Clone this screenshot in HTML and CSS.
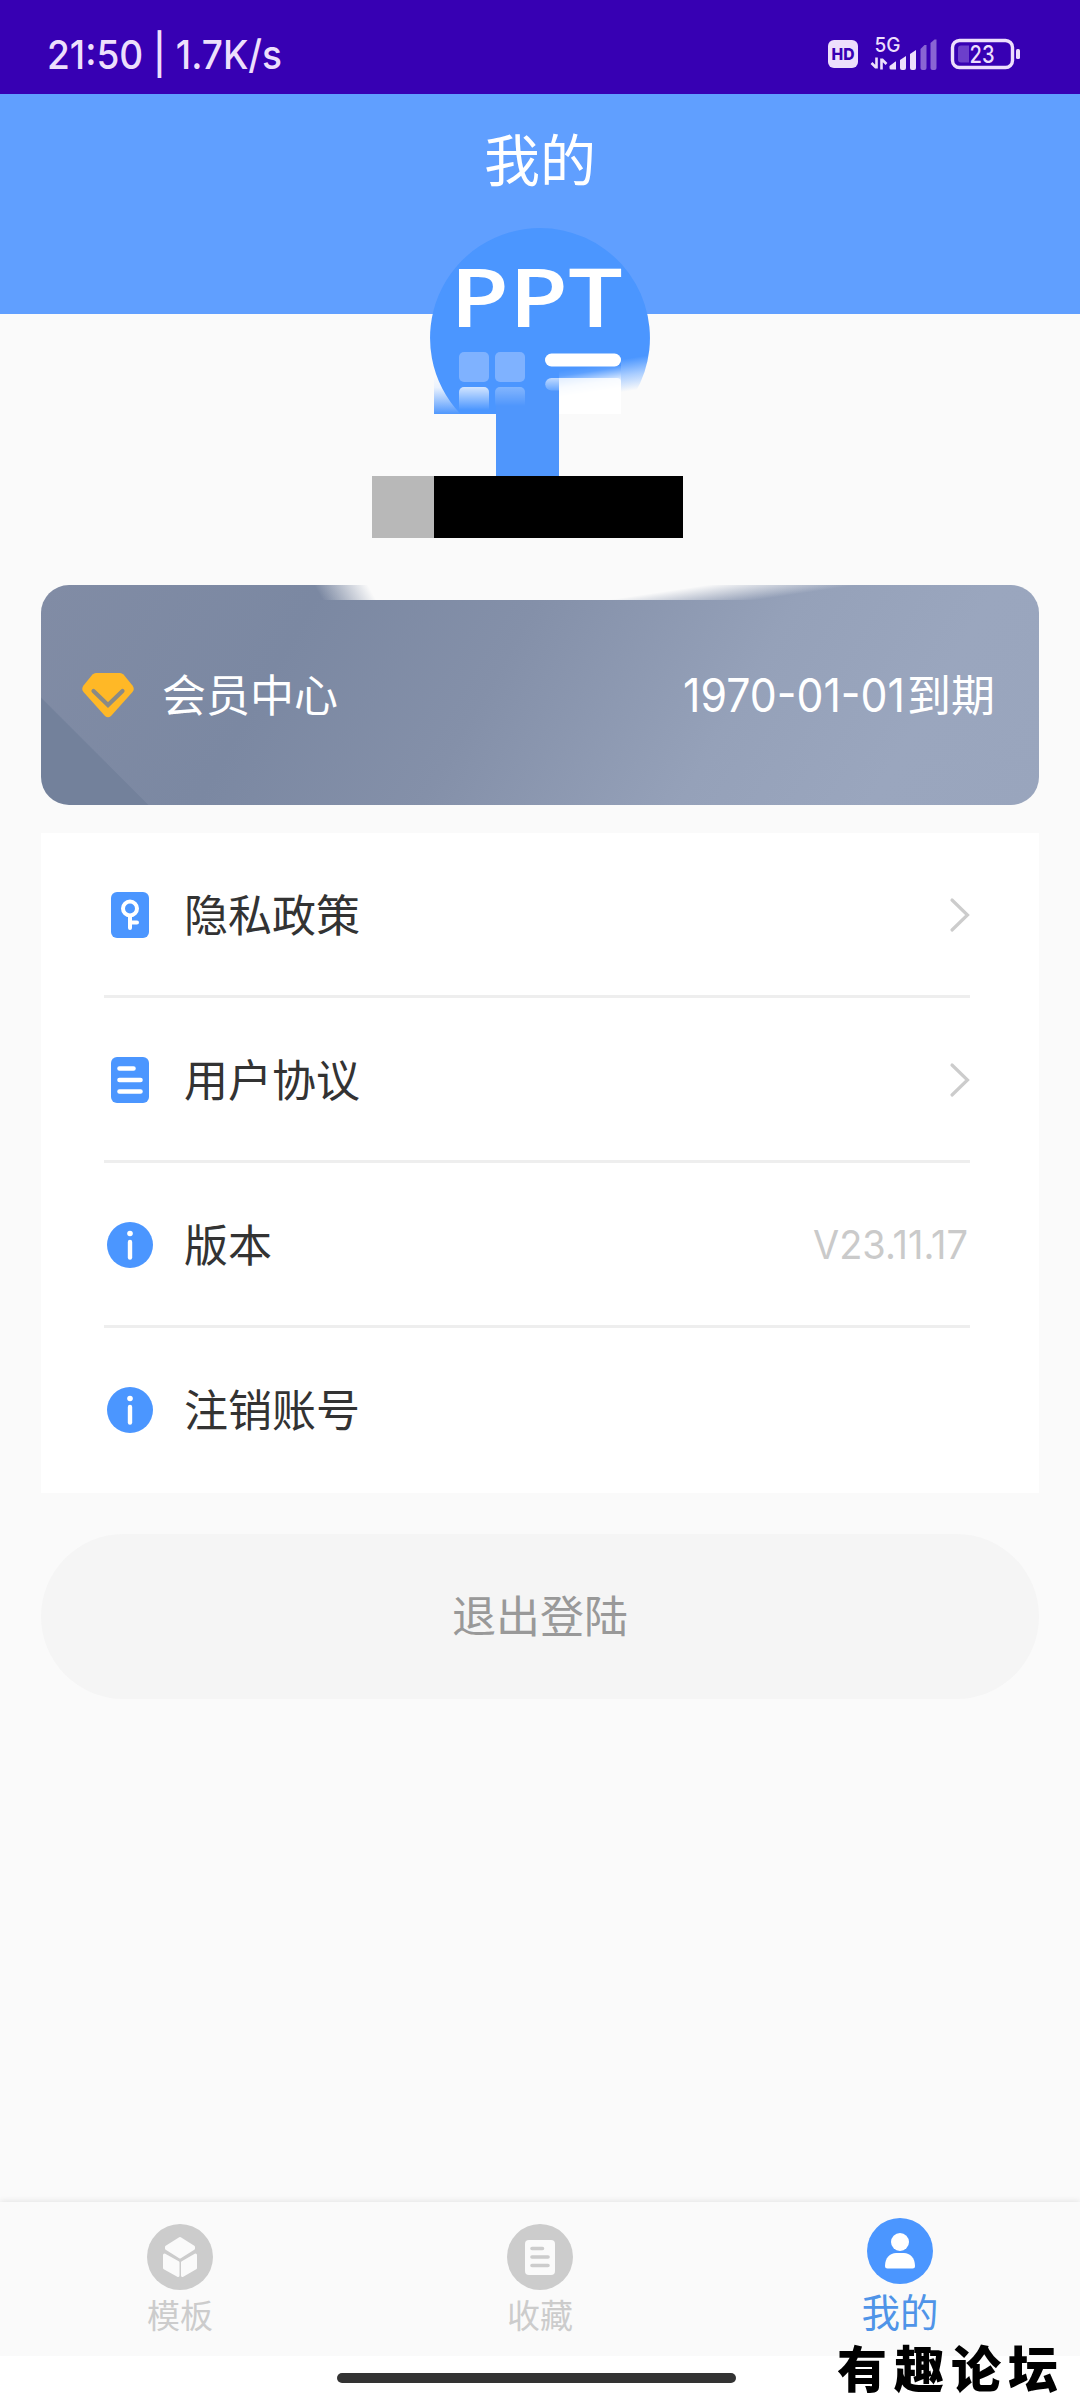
FILE: index.html
```html
<!DOCTYPE html>
<html lang="zh-CN">
<head>
<meta charset="utf-8">
<title>我的</title>
<link rel="stylesheet" href="styles.css">
</head>
<body>
<div class="screen">
  <div class="status">
    <svg class="status-time" width="240" height="50" viewBox="0 0 240 50"><text x="1" y="39" textLength="235" lengthAdjust="spacingAndGlyphs">21:50 | 1.7K/s</text></svg>
    <svg class="status-icons" width="196" height="36" viewBox="826 36 196 36">
      <rect x="828" y="40" width="30" height="28" rx="6" fill="#eddffc"/>
      <text class="hd" x="831.5" y="60" textLength="23" lengthAdjust="spacingAndGlyphs">HD</text>
      <text class="net" x="874.500" y="52" textLength="26" lengthAdjust="spacingAndGlyphs">5G</text>
      <path d="M876.500 57.500v11M876 67.500l-4.500-4.500M881.500 69.500v-11M882 59.500l4.500 4.500" fill="none" stroke="#eddffc" stroke-width="2.600"/>
      <g fill="#eddffc">
        <path d="M889.500 66l6-4.500h.5v8h-5a1.500 1.500 0 0 1-1.500-1.500z"/>
        <path d="M900 60l6-4v12a2 2 0 0 1-2 2h-2a2 2 0 0 1-2-2z"/>
        <path d="M910 54l6-4v18a2 2 0 0 1-2 2h-2a2 2 0 0 1-2-2z"/>
        <path opacity=".45" d="M920.500 49l4-4h2v23a2 2 0 0 1-2 2h-2a2 2 0 0 1-2-2z"/>
        <path opacity=".45" d="M930.500 43l4-3.500h2v28.500a2 2 0 0 1-2 2h-2a2 2 0 0 1-2-2z"/>
      </g>
      <rect x="952.500" y="40.500" width="60" height="27" rx="7" fill="none" stroke="#eddffc" stroke-width="3.400"/>
      <path d="M969 45.500h-8a3 3 0 0 0-3 3v11a3 3 0 0 0 3 3h8z" fill="#6c3fcb"/>
      <text class="level" x="969.500" y="63" textLength="25" lengthAdjust="spacingAndGlyphs">23</text>
      <rect x="1016" y="49" width="4" height="10" rx="1.500" fill="#eddffc"/>
    </svg>
  </div>

  <header class="header"><h1>我的</h1></header>

  <div class="profile">
    <svg class="avatar" width="312" height="312" viewBox="372 228 312 312">
      <defs>
        <clipPath id="disc"><path d="M430 228h220v165H621v21H430z"/></clipPath>
        <linearGradient id="leftFade" x1="0" y1="0" x2="0" y2="1"><stop offset="0" stop-color="#fafafa"/><stop offset=".3" stop-color="#eaf2fe"/><stop offset="1" stop-color="#4f97fd"/></linearGradient>
        <linearGradient id="whiteOut" gradientUnits="userSpaceOnUse" x1="585" y1="367" x2="589" y2="393"><stop offset="0" stop-color="#fff" stop-opacity="0"/><stop offset=".2" stop-color="#fff" stop-opacity=".1"/><stop offset=".65" stop-color="#fff" stop-opacity=".8"/><stop offset="1" stop-color="#fff"/></linearGradient>
        <linearGradient id="edgeOut" gradientUnits="userSpaceOnUse" x1="637" y1="357" x2="642" y2="389"><stop offset="0" stop-color="#4b96ff"/><stop offset=".5" stop-color="#a9cdff"/><stop offset="1" stop-color="#fafafa"/></linearGradient>
        <linearGradient id="tileA" x1="0" y1="0" x2="0" y2="1"><stop offset="0" stop-color="#fff" stop-opacity=".75"/><stop offset="1" stop-color="#fff" stop-opacity="0"/></linearGradient>
        <linearGradient id="tileB" x1="0" y1="0" x2="0" y2="1"><stop offset="0" stop-color="#fff" stop-opacity=".3"/><stop offset="1" stop-color="#fff" stop-opacity="0"/></linearGradient>
        <linearGradient id="stroke2" x1="0" y1="0" x2="0" y2="1"><stop offset="0" stop-color="#fff" stop-opacity=".65"/><stop offset="1" stop-color="#fff" stop-opacity=".15"/></linearGradient>
      </defs>
      <rect x="434" y="376" width="62" height="38" fill="url(#leftFade)"/>
      <path d="M540 228A110 110 0 0 0 461 414.500L540 414H621V350H649.300A110 110 0 0 0 540 228z" fill="#4b96ff" clip-path="url(#disc)"/>
      <path d="M621 350h28.300A110 110 0 0 1 635 393H621z" fill="url(#edgeOut)"/>
      <rect x="496" y="390" width="63" height="86" fill="#4f96fc"/>
      <path d="M559 366h62v48h-62z" fill="url(#whiteOut)"/>
      <rect x="459" y="352" width="30" height="30" rx="5" fill="#7fb2ff"/>
      <rect x="495" y="352" width="30" height="30" rx="5" fill="#7fb2ff"/>
      <path d="M459 410v-18a5 5 0 0 1 5-5h20a5 5 0 0 1 5 5v18z" fill="url(#tileA)"/>
      <path d="M495 406v-14a5 5 0 0 1 5-5h20a5 5 0 0 1 5 5v14z" fill="url(#tileB)"/>
      <rect x="545" y="353.500" width="76" height="13" rx="6.500" fill="#fff"/>
      <path d="M559 378h-7.500a6 6 0 0 0 0 12.500h7.500z" fill="url(#stroke2)"/>
      <path d="M559 378h58a4 4 0 0 1 4 4v32h-62z" fill="#fff" opacity=".8"/>
      <text class="ppt" x="450" y="327" textLength="172.500" lengthAdjust="spacingAndGlyphs">PPT</text>
      <rect x="372" y="476" width="62" height="62" fill="#b8b8b8"/>
      <rect x="434" y="476" width="249" height="62" fill="#000"/>
    </svg>
  </div>

  <section class="member">
    <svg class="gem" width="52" height="46" viewBox="0 0 52 46"><path d="M14 1h24q2 0 3.500 1.500l9 11q2.500 3.500 0 6.500L29 44q-3 2.500-6 0L1.500 20q-2.500-3 0-6.500l9-11Q12 1 14 1z" fill="#ffb826"/><path d="M11.500 19L26 33l14.500-14" fill="none" stroke="#8a8a86" stroke-width="4.200" stroke-linecap="round"/></svg>
    <span class="member-title">会员中心</span>
    <span class="expiry"><svg width="222" height="60" viewBox="0 0 222 60"><text x="-2" y="46.500" textLength="222" lengthAdjust="spacingAndGlyphs">1970-01-01</text></svg><span class="expiry-label">到期</span></span>
  </section>

  <section class="list">
    <div class="row">
      <svg class="icon" width="46" height="46" viewBox="0 0 46 46"><rect x="4" width="38" height="46" rx="6" fill="#4b96ff"/><g fill="none" stroke="#fff" stroke-width="4" stroke-linecap="round"><circle cx="23" cy="16.500" r="7"/><path d="M23 24v12M24 30.500h6"/></g></svg>
      <span>隐私政策</span>
      <svg class="arrow" width="20" height="34" viewBox="0 0 20 34"><path d="M2 2l15.500 15L2 32" fill="none" stroke="#ccc" stroke-width="3.200" stroke-linecap="round"/></svg>
    </div>
    <div class="row">
      <svg class="icon" width="46" height="46" viewBox="0 0 46 46"><rect x="4" width="38" height="46" rx="6" fill="#4b96ff"/><path d="M12.500 11.500h14M12.500 23h21M12.500 34.500h21" stroke="#fff" stroke-width="4.600" stroke-linecap="round"/></svg>
      <span>用户协议</span>
      <svg class="arrow" width="20" height="34" viewBox="0 0 20 34"><path d="M2 2l15.500 15L2 32" fill="none" stroke="#ccc" stroke-width="3.200" stroke-linecap="round"/></svg>
    </div>
    <div class="row">
      <svg class="icon" width="46" height="46" viewBox="0 0 46 46"><circle cx="23" cy="23" r="23" fill="#4b96ff"/><circle cx="23" cy="11.500" r="2.800" fill="#fff"/><path d="M23 20v15.500" stroke="#fff" stroke-width="4.400" stroke-linecap="round"/></svg>
      <span>版本</span>
      <svg class="version" width="156" height="46" viewBox="0 0 156 46"><text x="-1" y="37" textLength="155" lengthAdjust="spacingAndGlyphs">V23.11.17</text></svg>
    </div>
    <div class="row">
      <svg class="icon" width="46" height="46" viewBox="0 0 46 46"><circle cx="23" cy="23" r="23" fill="#4b96ff"/><circle cx="23" cy="11.500" r="2.800" fill="#fff"/><path d="M23 20v15.500" stroke="#fff" stroke-width="4.400" stroke-linecap="round"/></svg>
      <span>注销账号</span>
    </div>
  </section>

  <button class="logout">退出登陆</button>

  <nav class="tabs">
    <div class="tab">
      <svg width="66" height="66" viewBox="0 0 66 66"><circle cx="33" cy="33" r="33" fill="#ccc"/><g fill="#fafafa" stroke="#fafafa" stroke-width="3" stroke-linejoin="round"><path d="M33 14.500l13.500 8.500v1.500L33 33l-13.500-8.500V23z"/><path d="M17.500 31l13.500 7.500v13l-13.500-7.500zM48.500 31L35.500 38.500v13l13-7.500z"/></g></svg>
      <span>模板</span>
    </div>
    <div class="tab">
      <svg width="66" height="66" viewBox="0 0 66 66"><circle cx="33" cy="33" r="33" fill="#ccc"/><rect x="18" y="16" width="30" height="35" rx="4" fill="#fafafa"/><path d="M25 24.500h10.500M25 33h16M25 41.500h16" stroke="#ccc" stroke-width="3.600" stroke-linecap="round"/></svg>
      <span>收藏</span>
    </div>
    <div class="tab active">
      <svg width="66" height="66" viewBox="0 0 66 66"><circle cx="33" cy="33" r="33" fill="#4b96ff"/><circle cx="33" cy="24" r="9" fill="#fff"/><path d="M18 48c0-8 5-13 11-13h8c6 0 11 5 11 13q0 2.500-2.500 2.500h-25q-2.500 0-2.500-2.500z" fill="#fff"/></svg>
      <span>我的</span>
    </div>
  </nav>
  <div class="gesture"><div class="handle"></div></div>
  <div class="watermark">有趣论坛</div>
</div>
</body>
</html>
```
FILE: styles.css
```css
* { box-sizing: border-box; }
body { margin: 0; font-family: Inter, "Noto Sans CJK SC", sans-serif; }
svg { display: block; flex: none; overflow: visible; }
.screen {
  position: relative;
  width: 1080px;
  height: 2400px;
  overflow: hidden;
  display: flex;
  flex-direction: column;
  background: #fafafa;
}
.status {
  height: 94px;
  flex: none;
  padding: 30px 58px 0 46px;
  display: flex;
  justify-content: space-between;
  background: #3700b3;
}
.status-time text { font: 500 40px Inter, sans-serif; fill: #eddffc; }
.status-icons { margin-top: 6px; }
.hd { font: 800 16.500px Inter, sans-serif; fill: #3700b3; }
.net { font: 500 20px Inter, sans-serif; fill: #eddffc; }
.level { font: 500 24px Inter, sans-serif; fill: #eddffc; }
.header {
  height: 220px;
  flex: none;
  padding-top: 23px;
  background: #609fff;
  text-align: center;
}
.header h1 {
  margin: 0;
  font: 400 56px/80px "Noto Sans CJK SC", sans-serif;
  color: #fff;
}
.profile { height: 271px; flex: none; padding-left: 372px; }
.avatar { margin-top: -86px; }
.ppt { font: 600 82px "Open Sans", sans-serif; fill: #fff; }
.member {
  height: 220px;
  flex: none;
  margin: 0 41px;
  padding: 0 44px 0 41px;
  display: flex;
  align-items: center;
  border-radius: 28px;
  color: #fff;
  font: 400 44px/60px "Noto Sans CJK SC", sans-serif;
  background:
    linear-gradient(60deg, rgba(250,250,250,0) 18%, #fafafa 76%) 265px 0 / 84px 15px no-repeat,
    linear-gradient(#fafafa, #fafafa) 349px 0 / 210px 15px no-repeat,
    linear-gradient(171.500deg, #fafafa 30%, rgba(250,250,250,0) 72%) 559px 0 / 257px 15px no-repeat,
    linear-gradient(45deg, #73819b 75.500px, transparent 76.500px),
    linear-gradient(120deg, #818ca5 0%, #7b88a2 25%, #8490a9 45%, #95a1b9 68%, #9aa6be 85%, #99a5bd 100%);
}
.member-title { margin: -4px 0 0 28px; }
.expiry { display: flex; align-items: center; margin-left: auto; }
.expiry-label { margin-top: -4px; }
.expiry text { font: 400 46px Inter, sans-serif; fill: #fff; }
.list {
  height: 660px;
  flex: none;
  margin: 28px 41px 0;
  padding: 0 69px 0 63px;
  background: #fff;
}
.row {
  height: 165px;
  display: flex;
  align-items: center;
  padding: 2px 0 0 3px;
  border-bottom: 3px solid #eee;
  font: 400 44px/60px "Noto Sans CJK SC", sans-serif;
  color: #333;
}
.row:last-child { border-bottom-color: transparent; }
.row span { margin: -5px 0 0 31px; }
.arrow, .version { margin-left: auto; }
.version text { font: 400 39px Inter, sans-serif; fill: #cacaca; }
.logout {
  height: 165px;
  flex: none;
  margin: 41px 41px 0;
  padding: 0 0 5px;
  border: 0;
  border-radius: 83px;
  background: #f5f5f5;
  color: #999;
  font: 400 44px/60px "Noto Sans CJK SC", sans-serif;
}
.tabs {
  height: 154px;
  flex: none;
  margin-top: auto;
  display: grid;
  grid-template-columns: repeat(3, 1fr);
  background: #fafafa;
  box-shadow: 0 -1px 6px rgba(0,0,0,.09);
}
.tab {
  display: flex;
  flex-direction: column;
  align-items: center;
  padding-top: 22px;
  font: 400 33px/48px "Noto Sans CJK SC", sans-serif;
  color: #ccc;
}
.tab.active { padding-top: 16px; font-size: 38.500px; line-height: 53px; color: #4f94e8; }
.gesture {
  height: 44px;
  flex: none;
  padding: 17px 0 0 337px;
  background: #fff;
}
.handle { width: 399px; height: 10px; border-radius: 5px; background: #333; }
.watermark {
  position: absolute;
  left: 837px;
  top: 2333px;
  font: 900 50px/66px "Noto Sans CJK SC", sans-serif;
  letter-spacing: 7px;
  color: #000;
  white-space: nowrap;
}
```
